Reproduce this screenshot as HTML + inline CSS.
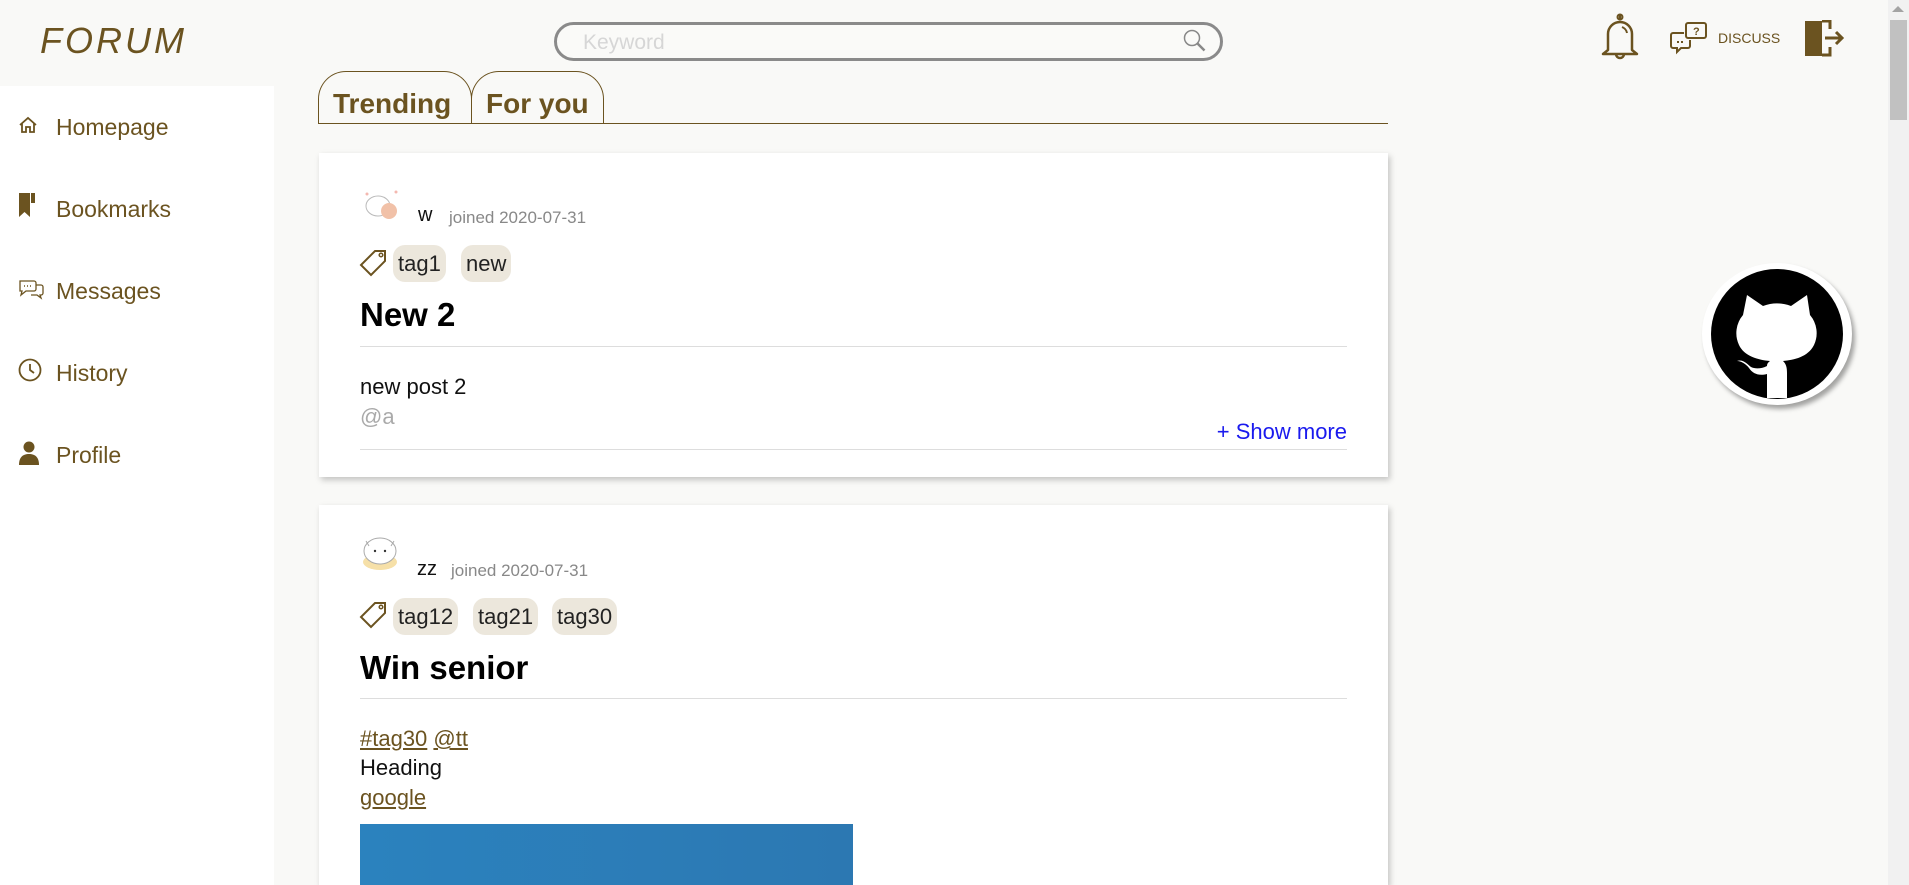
<!DOCTYPE html>
<html><head><meta charset="utf-8"><style>
*{margin:0;padding:0;box-sizing:border-box}
html,body{width:1909px;height:885px;overflow:hidden;background:#f9f9f7;font-family:"Liberation Sans",sans-serif}
.a{position:absolute}
.logo{left:40px;top:20px;font:italic 36px "Liberation Sans",sans-serif;color:#6b5320;letter-spacing:3px}
.search{left:554px;top:22px;width:669px;height:39px;border:3px solid #8a8a8a;border-radius:20px;background:#fafaf8}
.search span{position:absolute;left:26px;top:6px;font-size:21px;color:#d6d6d6}
.side{left:0;top:86px;width:274px;height:799px;background:#fff}
.nav{left:56px;font-size:23px;color:#6b5320}
.nicon{left:18px}
.tab{border:1px solid #6b5320;border-bottom:none;border-radius:28px 28px 0 0;height:53px;top:71px;font-weight:bold;font-size:28px;color:#6b5320;padding:16px 0 0 14px}
.card{left:319px;width:1069px;background:#fff;box-shadow:2px 3px 6px rgba(0,0,0,.22)}
.name{font-size:20px;color:#111}
.joined{font-size:17px;color:#888}
.tag{height:37px;border-radius:12px;background:#ece7dc;font-size:22px;color:#222;padding:6px 5px 0 5px}
.title{font-weight:bold;font-size:33px;color:#000}
.hr{left:360px;width:987px;height:1px;background:#ddd}
.txt{font-size:22px;color:#111}
.lnk{color:#6b5320;text-decoration:underline}
</style></head><body>
<div class="a logo">FORUM</div>
<div class="a search"><span>Keyword</span>
<svg class="a" style="left:625px;top:3px" width="26" height="26" viewBox="0 0 26 26"><circle cx="10" cy="10" r="7.5" fill="none" stroke="#888" stroke-width="1.5"/><path d="M15.5 15.5l7 7" stroke="#888" stroke-width="2.5"/></svg></div>

<svg class="a" style="left:1600px;top:12px" width="40" height="50" viewBox="0 0 40 50"><path d="M20 3v5M8 38V22a12 12 0 0 1 24 0v16l5 4H3z" fill="none" stroke="#6b5320" stroke-width="2.5" stroke-linejoin="round"/><circle cx="20" cy="5" r="2.5" fill="none" stroke="#6b5320" stroke-width="2"/><path d="M16 42a4 4 0 0 0 8 0" fill="none" stroke="#6b5320" stroke-width="2.5"/><path d="M22 15a8 8 0 0 1 5 6" fill="none" stroke="#6b5320" stroke-width="2"/></svg>
<svg class="a" style="left:1670px;top:21px" width="38" height="35" viewBox="0 0 38 35"><rect x="16" y="2" width="20" height="15" rx="2" fill="none" stroke="#6b5320" stroke-width="2"/><text x="23" y="14" font-size="11" font-weight="bold" fill="#6b5320" font-family="Liberation Sans">?</text><path d="M14 12H3a2 2 0 0 0-2 2v11a2 2 0 0 0 2 2h4v4l4-4h7a2 2 0 0 0 2-2v-6" fill="none" stroke="#6b5320" stroke-width="2"/><path d="M7 21h2M11 21h2" stroke="#6b5320" stroke-width="2"/></svg>
<div class="a" style="left:1718px;top:30px;font-size:14px;color:#6b5320">DISCUSS</div>
<svg class="a" style="left:1805px;top:20px" width="40" height="37" viewBox="0 0 40 37"><rect x="0" y="1" width="17" height="35" fill="#6b5320"/><path d="M17 1h8v8M25 27v8h-8" fill="none" stroke="#6b5320" stroke-width="3"/><path d="M20 18h16M31 12l6 6-6 6" fill="none" stroke="#6b5320" stroke-width="3"/></svg>

<div class="a" style="left:1702px;top:263px;width:150px;height:142px;border-radius:50%;background:#fff;box-shadow:3px 4px 5px rgba(0,0,0,.35)"></div>
<svg class="a" style="left:1707px;top:265px" width="140" height="138" viewBox="0 0 140 138"><ellipse cx="70" cy="69" rx="66" ry="65" fill="#000"/><path d="M40 30l16 11a40 40 0 0 1 28 0l16-11 3 20a28 28 0 0 1 4 30c-6 12-20 15-31 16 3 3 4 6 4 12v25H60v-24c-8 2-14 0-18-6-3-4-8-7-12-7 6-2 10 3 14 6 4 2 10 2 16-1 0-3 2-4 3-5-12-1-26-5-31-16a28 28 0 0 1 4-30z" fill="#fff"/></svg>

<div class="a" style="left:1888px;top:0;width:21px;height:885px;background:#f1f1f1"></div>
<div class="a" style="left:1890px;top:20px;width:17px;height:100px;background:#c1c1c1"></div>
<div class="a" style="left:1892px;top:6px;width:0;height:0;border-left:6px solid transparent;border-right:6px solid transparent;border-bottom:6px solid #a3a3a3"></div>

<div class="a side"></div>
<svg class="a nicon" style="top:115px" width="20" height="20" viewBox="0 0 20 20"><path d="M2 10L10 3l8 7M4 8v9h4v-5h4v5h4V8" fill="none" stroke="#6b5320" stroke-width="1.8"/></svg>
<div class="a nav" style="top:114px">Homepage</div>
<svg class="a nicon" style="top:193px" width="20" height="26" viewBox="0 0 20 26"><path d="M1 0h11v24l-5.5-5L1 24z" fill="#6b5320"/><rect x="13" y="0" width="4" height="10" fill="#6b5320"/></svg>
<div class="a nav" style="top:196px">Bookmarks</div>
<svg class="a nicon" style="top:278px" width="26" height="22" viewBox="0 0 26 22"><path d="M2 3h14a2 2 0 0 1 2 2v6a2 2 0 0 1-2 2H8l-5 4 1-4H2z M18 7h5a2 2 0 0 1 2 2v6a2 2 0 0 1-2 2h-1l1 3-4-3h-6" fill="none" stroke="#6b5320" stroke-width="1.3"/><path d="M6 8h1M9 8h1M12 8h1" stroke="#6b5320" stroke-width="1.5"/></svg>
<div class="a nav" style="top:278px">Messages</div>
<svg class="a nicon" style="top:358px" width="24" height="24" viewBox="0 0 24 24"><circle cx="12" cy="12" r="10.5" fill="none" stroke="#6b5320" stroke-width="1.8"/><path d="M12 6v6l4 3" fill="none" stroke="#6b5320" stroke-width="1.8"/></svg>
<div class="a nav" style="top:360px">History</div>
<svg class="a nicon" style="top:441px" width="22" height="24" viewBox="0 0 22 24"><circle cx="11" cy="6" r="5.5" fill="#6b5320"/><path d="M1 24c0-8 4-11 10-11s10 3 10 11z" fill="#6b5320"/></svg>
<div class="a nav" style="top:442px">Profile</div>

<div class="a tab" style="left:318px;width:154px">Trending</div>
<div class="a tab" style="left:471px;width:133px">For you</div>
<div class="a" style="left:318px;top:123px;width:1070px;height:1px;background:#6b5320"></div>

<div class="a card" style="top:153px;height:324px"></div>
<svg class="a" style="left:362px;top:188px" width="40" height="36" viewBox="0 0 40 36"><ellipse cx="16" cy="18" rx="12" ry="10" fill="#fff" stroke="#bbb"/><circle cx="27" cy="23" r="8" fill="#f1c1a8"/><circle cx="5" cy="6" r="1.5" fill="#f4b8b0"/><circle cx="34" cy="4" r="1.5" fill="#f4b8b0"/></svg>
<div class="a name" style="left:418px;top:204px">w</div>
<div class="a joined" style="left:449px;top:208px">joined 2020-07-31</div>
<svg class="a" style="left:359px;top:248px" width="30" height="30" viewBox="0 0 30 30"><path d="M16 3h10v10L12 27 2 17z" fill="none" stroke="#6b5320" stroke-width="2"/><circle cx="22" cy="7" r="1.8" fill="none" stroke="#6b5320" stroke-width="1.5"/></svg>
<div class="a tag" style="left:393px;top:245px">tag1</div>
<div class="a tag" style="left:461px;top:245px">new</div>
<div class="a title" style="left:360px;top:296px">New 2</div>
<div class="a hr" style="top:346px"></div>
<div class="a txt" style="left:360px;top:374px">new post 2</div>
<div class="a txt" style="left:360px;top:404px;color:#aaa">@a</div>
<div class="a txt" style="right:562px;top:419px;color:#1a1aee">+ Show more</div>
<div class="a hr" style="top:449px"></div>

<div class="a card" style="top:505px;height:380px"></div>
<svg class="a" style="left:360px;top:535px" width="42" height="40" viewBox="0 0 42 40"><ellipse cx="20" cy="27" rx="17" ry="8" fill="#f6e0a8"/><ellipse cx="20" cy="16" rx="16" ry="13" fill="#fff" stroke="#aaa"/><path d="M6 6l3 5M34 6l-3 5" stroke="#aaa"/><circle cx="15" cy="16" r="1.2" fill="#333"/><circle cx="25" cy="16" r="1.2" fill="#333"/></svg>
<div class="a name" style="left:417px;top:558px">zz</div>
<div class="a joined" style="left:451px;top:561px">joined 2020-07-31</div>
<svg class="a" style="left:359px;top:600px" width="30" height="30" viewBox="0 0 30 30"><path d="M16 3h10v10L12 27 2 17z" fill="none" stroke="#6b5320" stroke-width="2"/><circle cx="22" cy="7" r="1.8" fill="none" stroke="#6b5320" stroke-width="1.5"/></svg>
<div class="a tag" style="left:393px;top:598px">tag12</div>
<div class="a tag" style="left:473px;top:598px">tag21</div>
<div class="a tag" style="left:552px;top:598px">tag30</div>
<div class="a title" style="left:360px;top:649px">Win senior</div>
<div class="a hr" style="top:698px"></div>
<div class="a txt" style="left:360px;top:726px"><span class="lnk">#tag30</span> <span class="lnk">@tt</span></div>
<div class="a txt" style="left:360px;top:755px">Heading</div>
<div class="a txt lnk" style="left:360px;top:785px">google</div>
<div class="a" style="left:360px;top:824px;width:493px;height:61px;background:linear-gradient(90deg,#2b82be,#2c78b2)"></div>
</body></html>
